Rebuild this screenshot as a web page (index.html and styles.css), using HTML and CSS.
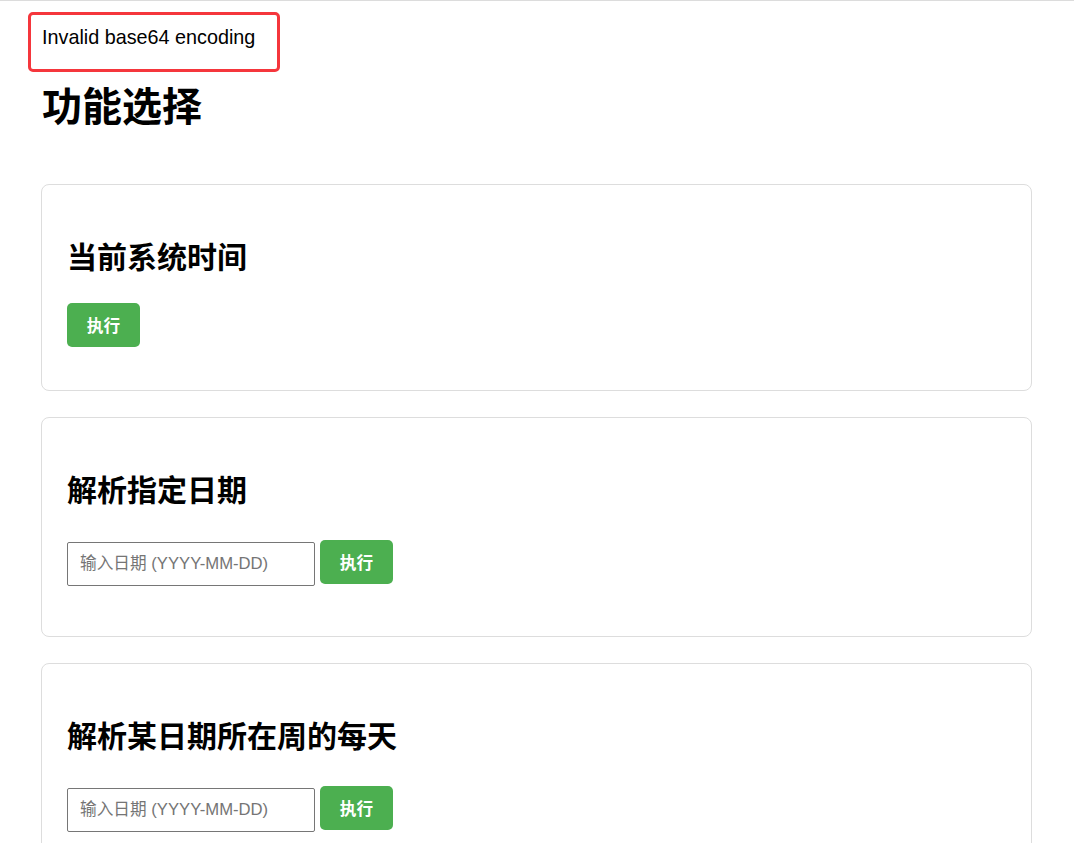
FILE: index.html
```html
<!DOCTYPE html>
<html lang="zh-CN">
<head>
    <meta charset="UTF-8">
    <meta name="viewport" content="width=device-width, initial-scale=1.0">
    <title>功能选择</title>
    <link rel="stylesheet" href="styles.css">
</head>
<body>
    <!-- Error message -->
    <div class="error-box">Invalid base64 encoding</div>

    <h1>功能选择</h1>

    <!-- Function cards -->
    <div class="card">
        <h2>当前系统时间</h2>
        <button class="run-button">执行</button>
    </div>

    <div class="card">
        <h2>解析指定日期</h2>
        <div class="row">
            <input class="date-input" type="text" placeholder="输入日期 (YYYY-MM-DD)">
            <button class="run-button">执行</button>
        </div>
    </div>

    <div class="card">
        <h2>解析某日期所在周的每天</h2>
        <div class="row">
            <input class="date-input" type="text" placeholder="输入日期 (YYYY-MM-DD)">
            <button class="run-button">执行</button>
        </div>
    </div>
</body>
</html>
```

FILE: styles.css
```css
body {
    font-family: "Liberation Sans", Arial, "Noto Sans CJK SC", sans-serif;
    font-size: 19.8px;
    color: #000;
    background-color: #fff;
    margin: 0;
    padding: 12px 42px 40px 41px;
    border-top: 1px solid #dcdcdc;
}
.error-box {
    box-sizing: border-box;
    width: 252px;
    height: 60px;
    margin-left: -13px;
    margin-top: -1px;
    padding: 11px 11px;
    border: 3px solid #f5363c;
    border-radius: 5px;
    line-height: 23px;
}
h1 {
    font-family: "Noto Sans CJK SC", sans-serif;
    font-size: 40px;
    line-height: 48px;
    font-weight: bold;
    margin: 8px 0 56px 1px;
}
.card {
    border: 1px solid #dddddd;
    border-radius: 8px;
    padding: 52px 25px 43px 25px;
    margin-bottom: 26px;
}
.card h2 {
    font-family: "Noto Sans CJK SC", sans-serif;
    font-size: 30px;
    line-height: 36px;
    font-weight: bold;
    margin: 0 0 30px 0;
}
.row {
    display: flex;
    align-items: flex-start;
    gap: 5px;
    padding: 4px 0 7px 0;
}
.date-input {
    box-sizing: border-box;
    width: 248px;
    height: 44px;
    margin-top: 2px;
    padding: 0 12px;
    border: 1px solid #767676;
    border-radius: 2px;
    font-family: "Liberation Sans", Arial, "Noto Sans CJK SC", sans-serif;
    font-size: 16.67px;
    color: #000;
}
.date-input::placeholder {
    color: #757575;
}
.run-button {
    box-sizing: border-box;
    width: 73px;
    height: 44px;
    padding: 0;
    border: none;
    border-radius: 5px;
    background-color: #4caf50;
    color: #fff;
    font-family: "Noto Sans CJK SC", sans-serif;
    font-size: 16.67px;
    font-weight: bold;
    cursor: pointer;
}
```
